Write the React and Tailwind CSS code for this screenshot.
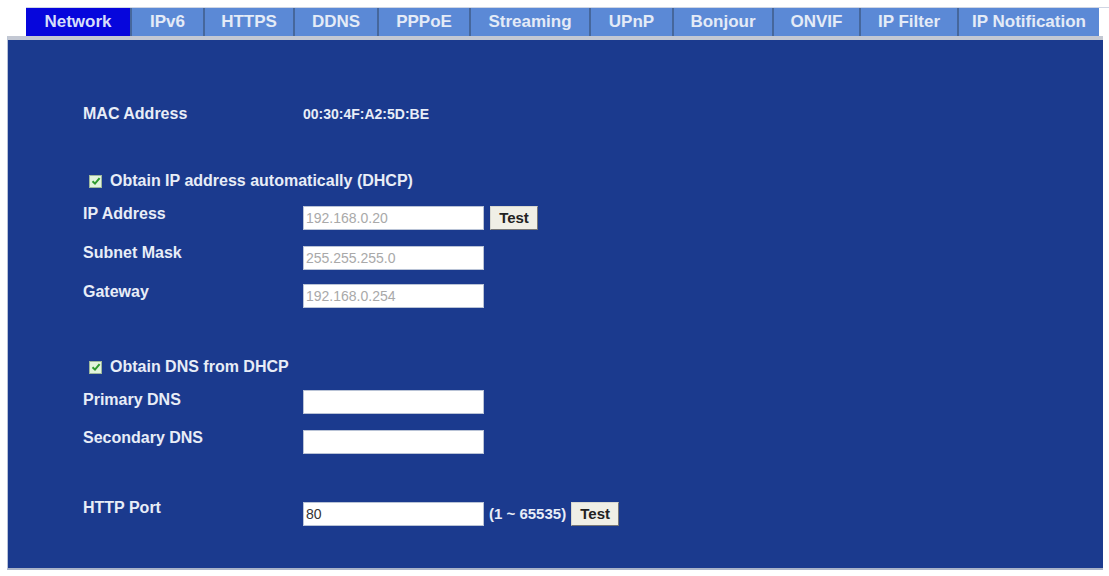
const tabs = [
  { label: "Network", w: "w-[104px]", active: true },
  { label: "IPv6", w: "w-[73px]" },
  { label: "HTTPS", w: "w-[90px]" },
  { label: "DDNS", w: "w-[84px]" },
  { label: "PPPoE", w: "w-[92px]" },
  { label: "Streaming", w: "w-[120px]" },
  { label: "UPnP", w: "w-[83px]" },
  { label: "Bonjour", w: "w-[100px]" },
  { label: "ONVIF", w: "w-[87px]" },
  { label: "IP Filter", w: "w-[98px]" },
  { label: "IP Notification", w: "w-[142px]" },
];

function Check({ label }) {
  return (
    <div className="flex h-[18px] items-center pl-[6px]">
      <span className="flex h-[13px] w-[13px] items-center justify-center border border-[#9fb89a] bg-[#e2f4dc]">
        <svg viewBox="0 0 10 10" className="h-[10px] w-[10px]">
          <path d="M1.5 5.2 L4 7.6 L8.6 2.2" fill="none" stroke="#2e9a2e" strokeWidth="2" />
        </svg>
      </span>
      <span className="ml-[8px] text-[16px] font-bold leading-[18px] text-[#e8edf7]">{label}</span>
    </div>
  );
}

function Field({ value = "", dim }) {
  return (
    <input
      readOnly
      value={value}
      className={`h-[24px] w-[181px] border border-[#b9c3d6] bg-white px-[2px] text-[14px] outline-none ${
        dim ? "text-[#a9a9a9]" : "text-[#333]"
      }`}
    />
  );
}

function TestButton() {
  return (
    <button className="h-[24px] w-[48px] border border-[#d8d8d0] border-b-[#777] border-r-[#777] bg-[#f0efe6] text-[15px] font-bold leading-[20px] text-[#222]">
      Test
    </button>
  );
}

function Label({ children, className = "" }) {
  return (
    <div className={`w-[220px] shrink-0 text-[16px] font-bold leading-[18px] text-[#e8edf7] ${className}`}>
      {children}
    </div>
  );
}

export default function App() {
  return (
    <div className="h-[576px] w-[1109px] overflow-hidden bg-white pt-[7px] font-['Liberation_Sans',Arial,sans-serif]">
      <div className="ml-[26px] flex h-[29px] border-t border-[#cfd6e4]">
        {tabs.map((t, i) => (
          <div
            key={t.label}
            className={`${t.w} flex shrink-0 items-center justify-center text-[17px] font-bold ${
              i > 0 ? "border-l-2 border-[#46679c]" : ""
            } ${t.active ? "bg-[#0606dc] text-[#d6defa]" : "bg-[#5b89d6] text-[#e4ebf7]"}`}
          >
            {t.label}
          </div>
        ))}
      </div>
      <div className="ml-[7px] h-[534px] w-[1096px] border-t-4 border-l border-b-2 border-t-[#c3c8d3] border-l-[#b8c2d8] border-b-[#aab3c8] bg-[#1b3a8e] pl-[75px] pt-px">
        <div className="mt-[64px] flex h-[18px] items-center">
          <Label>MAC Address</Label>
          <span className="text-[14px] font-bold text-[#e8edf7]">00:30:4F:A2:5D:BE</span>
        </div>

        <div className="mt-[49px]">
          <Check label="Obtain IP address automatically (DHCP)" />
        </div>

        <div className="mt-[15px] flex items-start">
          <Label>IP Address</Label>
          <div className="mt-[1px] flex items-center gap-[6px]">
            <Field value="192.168.0.20" dim />
            <TestButton />
          </div>
        </div>

        <div className="mt-[14px] flex items-start">
          <Label>Subnet Mask</Label>
          <div className="mt-[2px]">
            <Field value="255.255.255.0" dim />
          </div>
        </div>

        <div className="mt-[13px] flex items-start">
          <Label>Gateway</Label>
          <div className="mt-[1px]">
            <Field value="192.168.0.254" dim />
          </div>
        </div>

        <div className="mt-[50px]">
          <Check label="Obtain DNS from DHCP" />
        </div>

        <div className="mt-[14px] flex items-start">
          <Label className="mt-[1px]">Primary DNS</Label>
          <Field />
        </div>

        <div className="mt-[15px] flex items-start">
          <Label>Secondary DNS</Label>
          <div className="mt-[1px]">
            <Field />
          </div>
        </div>

        <div className="mt-[45px] flex items-start">
          <Label>HTTP Port</Label>
          <div className="mt-[3px] flex items-center">
            <Field value="80" />
            <span className="ml-[5px] text-[15px] font-bold text-[#e8edf7]">(1 ~ 65535)</span>
            <span className="ml-[5px]">
              <TestButton />
            </span>
          </div>
        </div>
      </div>
    </div>
  );
}
